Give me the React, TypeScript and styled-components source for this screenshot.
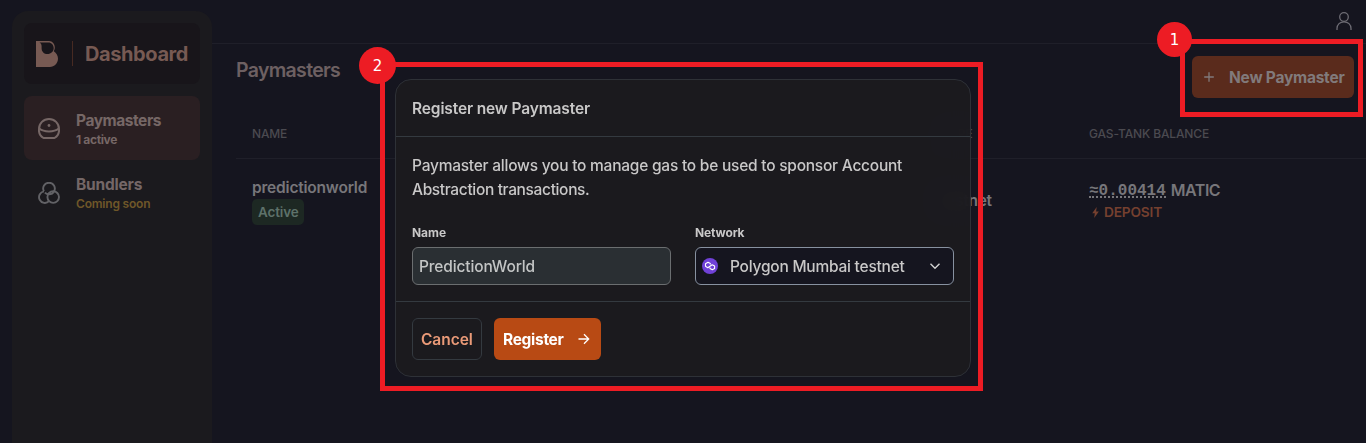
import React from 'react';
import styled, { createGlobalStyle } from 'styled-components';

const GlobalStyle = createGlobalStyle`
  *, *::before, *::after { box-sizing: border-box; }
  body {
    margin: 0;
    background: #15151f;
    font-family: Inter, "Liberation Sans", sans-serif;
    font-weight: 500;
    color: #77767a;
    overflow: hidden;
  }
  button, input { font-family: inherit; margin: 0; }
`;

const Label = styled.span<{ $size?: number; $weight?: number; $track?: number; $line?: number; $color?: string; $drop?: boolean }>`
  display: block;
  white-space: nowrap;
  font-size: ${p => p.$size ?? 15.5}px;
  font-weight: ${p => p.$weight ?? 500};
  letter-spacing: ${p => p.$track ?? 0}px;
  line-height: ${p => p.$line ?? 24}px;
  ${p => p.$drop && 'padding-top: 1px; margin-bottom: -1px;'}
  ${p => p.$color && `color: ${p.$color};`}
`;

const Page = styled.div`
  position: relative;
  display: flex;
  width: 1366px;
  height: 443px;
  overflow: hidden;
`;

const Sidebar = styled.aside`
  flex: none;
  width: 200px;
  margin: 11px 0 0 12px;
  padding: 12px;
  border-radius: 16px 16px 0 0;
  background: #1b1a1e;
`;

const Brand = styled.div`
  display: flex;
  align-items: center;
  height: 61px;
  margin-bottom: 12px;
  padding-left: 12px;
  border-radius: 8px;
  background: #18151a;
`;

const BrandRule = styled.span`
  width: 1px;
  height: 25px;
  margin: 0 12px 0 14px;
  background: #472a22;
`;

const NavItem = styled.a<{ $active?: boolean }>`
  display: flex;
  align-items: center;
  gap: 16px;
  height: 64px;
  padding: 2px 0 0 14px;
  border-radius: 8px;
  color: ${p => (p.$active ? '#766766' : '#626266')};
  background: ${p => (p.$active ? '#2a1f22' : 'transparent')};
`;

const Main = styled.main`
  flex: 1;
  min-width: 0;
`;

const TopBar = styled.header`
  display: flex;
  justify-content: flex-end;
  height: 44px;
  padding: 12px 14px 0 0;
  border-bottom: 1px solid #1f1f29;
`;

const Content = styled.section`
  padding: 12px 12px 0 24px;
`;

const TitleRow = styled.div`
  display: flex;
  justify-content: space-between;
  align-items: flex-start;
  height: 54px;
`;

const NewButton = styled.button`
  display: flex;
  align-items: center;
  gap: 15px;
  width: 162px;
  height: 42px;
  padding: 0 0 0 12px;
  border: 0;
  border-radius: 6px;
  color: #817a7b;
  background: #5a2b1c;
`;

const TableRow = styled.div<{ $head?: boolean }>`
  display: grid;
  grid-template-columns: 689px 148px 1fr;
  align-items: center;
  height: ${p => (p.$head ? 49 : 84)}px;
  margin-right: -12px;
  padding-left: 16px;
  ${p => p.$head && 'border-bottom: 1px solid #1f1f29; color: #4b4a50;'}
`;

const Cell = styled.div`
  padding-bottom: 2px;
`;

const Badge = styled.div`
  width: 52px;
  height: 26px;
  padding-left: 6px;
  border-radius: 5px;
  color: #5d716a;
  background: #1d2823;
`;

const Inline = styled.div<{ $gap?: number }>`
  display: flex;
  align-items: center;
  gap: ${p => p.$gap ?? 0}px;
`;

const Amount = styled.span`
  height: 12px;
  margin: 4px 5px 0 0;
  font: 700 16px/11px "Liberation Mono", monospace;
  border-bottom: 2px dotted #77767a;
`;

const Deposit = styled(Inline)`
  color: #75402f;
  padding-left: 3px;
`;

const Dialog = styled.div`
  position: absolute;
  left: 395px;
  top: 79px;
  width: 576px;
  height: 298px;
  border: 1px solid #2e3137;
  border-radius: 16px;
  color: #c9c8c8;
  background: rgba(28, 27, 31, 0.94);
  backdrop-filter: blur(10px);
  overflow: hidden;
`;

const DialogHeader = styled.div`
  height: 57px;
  padding: 16px;
  border-bottom: 1px solid #343a40;
`;

const DialogBody = styled.div`
  height: 165px;
  padding: 16px;
  border-bottom: 1px solid #343a40;
`;

const Fields = styled.div`
  display: grid;
  grid-template-columns: 259px 259px;
  gap: 24px;
  margin-top: 23px;
`;

const TextInput = styled.input`
  display: block;
  width: 100%;
  height: 38px;
  margin-top: 7px;
  padding: 0 6px;
  border: 1px solid #6b6e70;
  border-radius: 6px;
  outline: 0;
  font-size: 15.5px;
  font-weight: 500;
  letter-spacing: -0.14px;
  color: #c3c5c5;
  background: #2a2f33;
`;

const SelectBox = styled.div`
  display: flex;
  align-items: center;
  height: 38px;
  margin-top: 7px;
  padding: 0 11px 0 6px;
  border: 1px solid #8791a0;
  border-radius: 6px;
  background: #15151f;
  svg:first-child { margin-right: 12px; }
  svg:last-child { margin-left: auto; }
`;

const DialogFooter = styled.div`
  display: flex;
  gap: 12px;
  padding: 16px;
`;

const ActionButton = styled.button<{ $primary?: boolean }>`
  display: flex;
  align-items: center;
  gap: 14px;
  width: ${p => (p.$primary ? 107 : 70)}px;
  height: 42px;
  padding: 0 0 0 ${p => (p.$primary ? 9 : 8)}px;
  border: ${p => (p.$primary ? '0' : '1px solid #343a40')};
  border-radius: 6px;
  color: ${p => (p.$primary ? '#ffffff' : '#ea9a78')};
  background: ${p => (p.$primary ? '#b84a14' : 'transparent')};
`;

const Marker = styled.div<{ $x: number; $y: number; $w: number; $h: number }>`
  position: absolute;
  left: ${p => p.$x}px;
  top: ${p => p.$y}px;
  width: ${p => p.$w}px;
  height: ${p => p.$h}px;
  border: 5px solid #ed1c24;
`;

const MarkerNumber = styled.div<{ $x: number; $y: number; $d: number }>`
  position: absolute;
  left: ${p => p.$x}px;
  top: ${p => p.$y}px;
  width: ${p => p.$d}px;
  height: ${p => p.$d}px;
  border-radius: 50%;
  text-align: center;
  font: 400 15px/${p => p.$d + 1}px "DejaVu Sans", sans-serif;
  color: #fff;
  background: #ed1c24;
`;

const Logo = () => (
  <svg width="22" height="26" viewBox="0 0 22 26">
    <path
      fill="#775a53"
      fillRule="evenodd"
      d="M0 0H13C16.5 0 18.8 3 18.8 6.5C18.8 8 18.4 9 17.8 10.2C20.4 11.8 22 14.5 22 17.6C22 22.4 18.5 26 13.8 26H0ZM3.5 1.4C5.2 2.4 5.6 3.6 5.6 5.3V7.3C5.6 10.8 8.2 13.1 11.4 13.1C15 13.1 17.7 10.4 17.7 7C17.7 3.8 15.3 1.4 12.5 1.4Z"
    />
  </svg>
);

const PaymasterIcon = () => (
  <svg width="22" height="22" viewBox="0 0 22 22" fill="none" stroke="currentColor" strokeWidth="2">
    <path d="M5.5 20A10 9.6 0 0 1 1 11C1 5.4 5.4 1 11 1S21 5.4 21 11A10 9.6 0 0 1 16.5 20Z" strokeLinejoin="round" />
    <path d="M1.3 10.5C6 14.4 16 14.4 20.7 10.5" />
    <circle cx="11" cy="7.5" r="1.4" fill="currentColor" stroke="none" />
  </svg>
);

const BundlerIcon = () => (
  <svg width="22" height="22" viewBox="0 0 22 22" fill="none" stroke="currentColor" strokeWidth="1.9">
    <path d="M5.9 9.3A5.8 5.8 0 1 1 16.1 9.3C15.2 11.1 13.3 12.3 11 12.3C9.3 12.3 7.9 11.7 6.9 10.7" />
    <path d="M6 9.4A5.8 5.8 0 1 0 11 19.2" />
    <circle cx="15.2" cy="15.1" r="5.8" />
  </svg>
);

const UserIcon = () => (
  <svg width="16" height="19" viewBox="0 0 16 19" fill="none" stroke="#6d6c74" strokeWidth="1.3">
    <circle cx="8" cy="5" r="4.3" />
    <path d="M1 18V16.5C1 12.5 4 9.8 8 9.8S15 12.5 15 16.5V18" />
  </svg>
);

const PlusIcon = () => (
  <svg width="10" height="10" viewBox="0 0 10 10" stroke="currentColor" strokeWidth="1.3">
    <path d="M5 0.2V9.8M0.2 5H9.8" />
  </svg>
);

const BoltIcon = () => (
  <svg width="7" height="11" viewBox="0 0 7 11" fill="currentColor">
    <path d="M4.7 0L0.2 6.2H2.8L2.2 11L6.8 4.6H4.1Z" />
  </svg>
);

const PolygonIcon = () => (
  <svg width="16" height="16" viewBox="0 0 16 16" fill="none">
    <circle cx="8" cy="8" r="8" fill="#7041d8" />
    <path
      d="M8.3 6.5V5.6L6 4.3L3.5 5.7V8.3L5.8 9.7L10.2 6.7L12.6 8V10.4L10.3 11.7L8 10.4V9.5"
      stroke="#fff"
      strokeWidth="1.1"
      strokeLinejoin="round"
    />
  </svg>
);

const ChevronIcon = () => (
  <svg width="14" height="14" viewBox="0 0 14 14" fill="none" stroke="#d0d0d0" strokeWidth="1.4">
    <path d="M2.5 4.7L7 9.2L11.5 4.7" />
  </svg>
);

const ArrowIcon = () => (
  <svg width="12" height="12" viewBox="0 0 12 12" fill="none" stroke="currentColor" strokeWidth="1.3">
    <path d="M0.5 6H10.6M6 1.3L10.7 6L6 10.7" />
  </svg>
);

export default function App() {
  return (
    <Page>
      <GlobalStyle />
      <Sidebar>
        <Brand>
          <Logo />
          <BrandRule />
          <Label $size={20} $weight={700} $track={-0.4} $color="#775a53">Dashboard</Label>
        </Brand>
        <NavItem $active>
          <PaymasterIcon />
          <div>
            <Label $weight={700} $track={-0.45} $line={22}>Paymasters</Label>
            <Label $size={12} $weight={700} $track={-0.35} $line={16}>1 active</Label>
          </div>
        </NavItem>
        <NavItem>
          <BundlerIcon />
          <div>
            <Label $weight={700} $track={-0.2} $line={22} $color="#746767">Bundlers</Label>
            <Label $size={12} $weight={600} $track={-0.2} $line={16} $color="#6f5729">Coming soon</Label>
          </div>
        </NavItem>
      </Sidebar>

      <Main>
        <TopBar><UserIcon /></TopBar>
        <Content>
          <TitleRow>
            <Label $size={19.5} $weight={600} $track={-0.68} $line={28} $color="#6d6062">Paymasters</Label>
            <NewButton>
              <PlusIcon />
              <Label $weight={700} $track={-0.23} $drop>New Paymaster</Label>
            </NewButton>
          </TitleRow>
          <TableRow $head>
            <Label $size={12} $track={-0.2}>NAME</Label>
            <Label $size={12} $track={0.1}>TYPE</Label>
            <Label $size={12} $track={-0.13}>GAS-TANK BALANCE</Label>
          </TableRow>
          <TableRow>
            <Cell>
              <Label $weight={600} $track={-0.2} $drop>predictionworld</Label>
              <Badge><Label $size={13.5} $weight={600} $track={-0.15} $line={26}>Active</Label></Badge>
            </Cell>
            <Label $weight={600} $track={-0.25}>testnet</Label>
            <Cell>
              <Inline>
                <Amount>≈0.00414</Amount>
                <Label $size={16} $weight={600} $track={-0.5}>MATIC</Label>
              </Inline>
              <Deposit $gap={5}>
                <BoltIcon />
                <Label $size={13.7} $weight={600} $track={-0.18} $line={20}>DEPOSIT</Label>
              </Deposit>
            </Cell>
          </TableRow>
        </Content>
      </Main>

      <Dialog role="dialog">
        <DialogHeader>
          <Label $weight={600} $track={-0.13} $drop>Register new Paymaster</Label>
        </DialogHeader>
        <DialogBody>
          <Label $track={-0.235} $drop>Paymaster allows you to manage gas to be used to sponsor Account</Label>
          <Label $track={-0.35} $drop>Abstraction transactions.</Label>
          <Fields>
            <div>
              <Label $size={12} $weight={700} $track={-0.05} $line={16} $drop>Name</Label>
              <TextInput defaultValue="PredictionWorld" />
            </div>
            <div>
              <Label $size={12} $weight={700} $track={-0.13} $line={16} $drop>Network</Label>
              <SelectBox>
                <PolygonIcon />
                <Label $track={-0.23} $drop>Polygon Mumbai testnet</Label>
                <ChevronIcon />
              </SelectBox>
            </div>
          </Fields>
        </DialogBody>
        <DialogFooter>
          <ActionButton>
            <Label $weight={600} $track={-0.05} $drop>Cancel</Label>
          </ActionButton>
          <ActionButton $primary>
            <Label $weight={700} $track={-0.3} $drop>Register</Label>
            <ArrowIcon />
          </ActionButton>
        </DialogFooter>
      </Dialog>

      <Marker $x={1180} $y={39} $w={183} $h={78} />
      <MarkerNumber $x={1157} $y={22} $d={35}>1</MarkerNumber>
      <Marker $x={380} $y={62} $w={603} $h={329} />
      <MarkerNumber $x={359} $y={47} $d={37}>2</MarkerNumber>
    </Page>
  );
}
